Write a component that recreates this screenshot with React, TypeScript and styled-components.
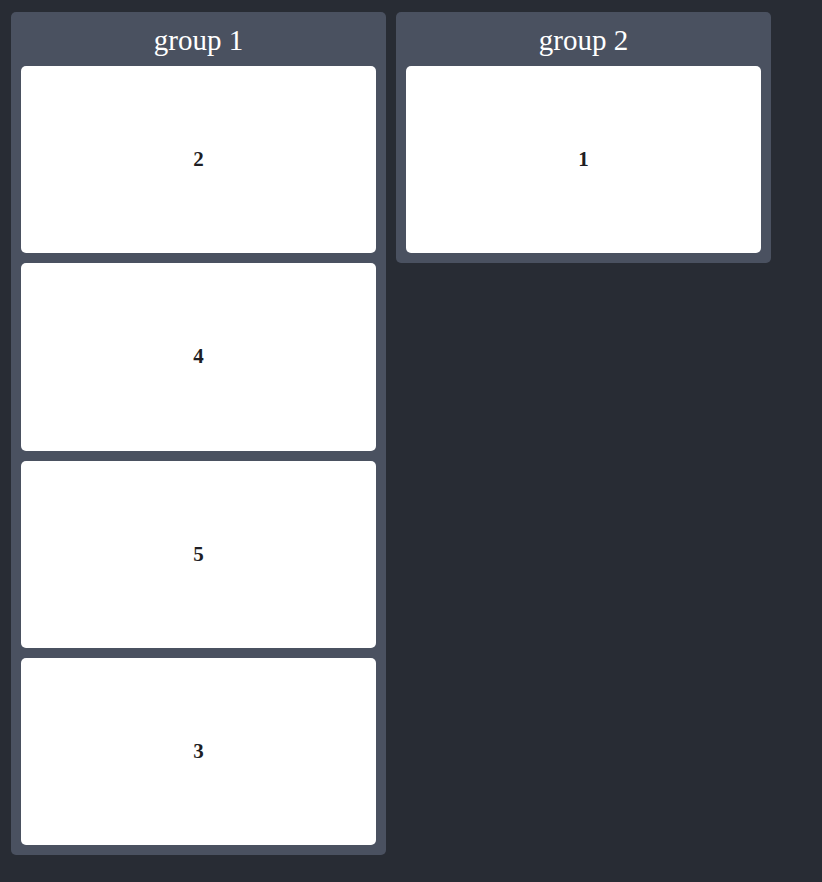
import React from "react";
import styled, { createGlobalStyle } from "styled-components";

const Global = createGlobalStyle`
  html, body { margin: 0; padding: 0; background: #282c34; }
  body { font-family: "Liberation Serif", "Times New Roman", serif; }
`;

const Board = styled.div`
  display: flex;
  align-items: flex-start;
  gap: 10px;
  padding: 12px 11px 26px 11px;
  min-height: 882px;
  box-sizing: border-box;
  background: #282c34;
`;

const Group = styled.div`
  width: 375px;
  box-sizing: border-box;
  background: #4a5160;
  border-radius: 5px;
  padding: 0 10px 10px;
  display: flex;
  flex-direction: column;
  gap: 10px;
`;

const Title = styled.div`
  height: 44px;
  box-sizing: border-box;
  padding-top: 12px;
  display: flex;
  align-items: center;
  justify-content: center;
  color: #ffffff;
  font-size: 29px;
  font-family: "Liberation Serif", "Times New Roman", serif;
`;

const Card = styled.div`
  height: 187.3px;
  background: #ffffff;
  border-radius: 5px;
  display: flex;
  align-items: center;
  justify-content: center;
  font-weight: bold;
  font-size: 21px;
  color: #1e1e24;
  font-family: "Liberation Serif", "Times New Roman", serif;
`;

const groups = [
  { name: "group 1", items: ["2", "4", "5", "3"] },
  { name: "group 2", items: ["1"] },
];

export default function App() {
  return (
    <>
      <Global />
      <Board>
        {groups.map((g) => (
          <Group key={g.name}>
            <Title>{g.name}</Title>
            {g.items.map((i) => (
              <Card key={i}>{i}</Card>
            ))}
          </Group>
        ))}
      </Board>
    </>
  );
}
